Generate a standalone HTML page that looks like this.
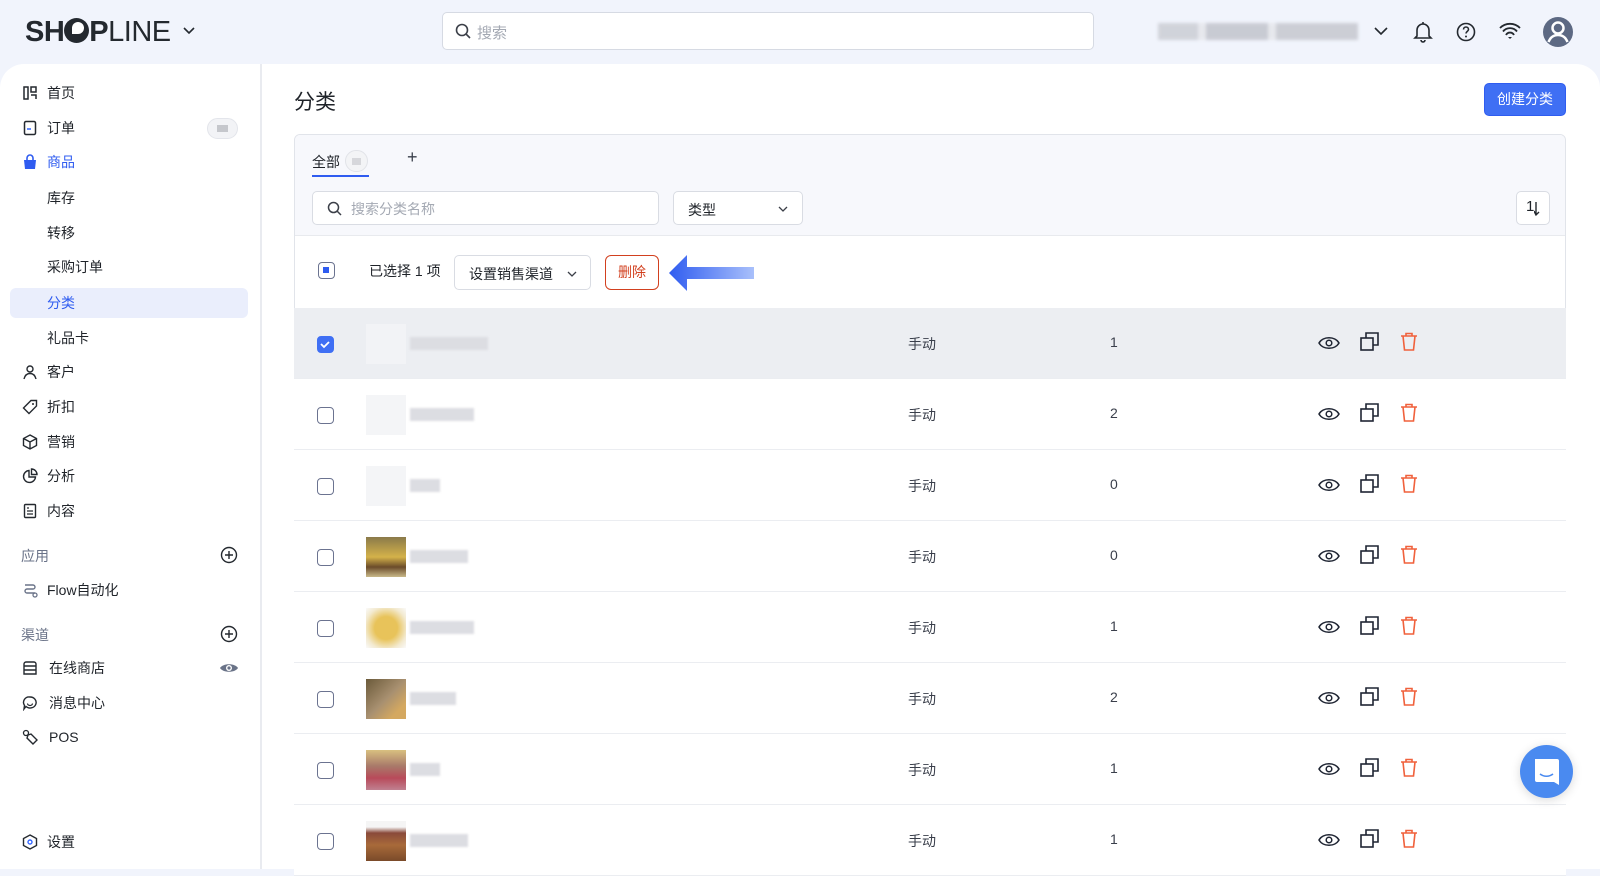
<!DOCTYPE html>
<html><head><meta charset="utf-8">
<style>
*{box-sizing:border-box;margin:0;padding:0}
body{width:1600px;height:869px;overflow:hidden;background:#f1f4fc;font-family:"Liberation Sans","Noto Sans CJK SC",sans-serif;color:#1f2329;position:relative;font-size:14px}
.abs{position:absolute}
.logo{left:25px;top:16px;font-size:29px;letter-spacing:-0.5px;color:#24292f;line-height:32px}
.logo b{font-weight:700}
.search{left:442px;top:12px;width:652px;height:38px;background:#fff;border:1px solid #d6dae3;border-radius:5px}
.search span{position:absolute;left:34px;top:9px;color:#a4a9b3;font-size:15px}
.panel{left:0;top:64px;width:1600px;height:805px;background:#fff;border-radius:24px 24px 0 0}
.side{left:260px;top:64px;width:2px;height:805px;background:#e9ebf0}
.nav{left:47px;font-size:14px;color:#1f2329;line-height:18px}
.ico{left:22px;width:16px;height:16px}
.sec{left:21px;color:#6a7388;font-size:14px}
.active{left:10px;top:288px;width:238px;height:30px;background:#eaeefc;border-radius:6px}
.card{left:294px;top:134px;width:1272px;height:740px;border:1px solid #e1e4ea;border-radius:6px;background:#fff;overflow:hidden}
.cardtop{left:0;top:0;width:1272px;height:101px;background:#f7f8fc;border-bottom:1px solid #e8eaee}
.input{background:#fff;border:1px solid #d9dce3;border-radius:5px;height:34px}
.row{position:absolute;left:0;width:1272px;height:71px;border-bottom:1px solid #ebedf1;background:#fff}
.cb{position:absolute;left:23px;top:28px;width:17px;height:17px;border:1.6px solid #6b7390;border-radius:4px;background:#fff}
.thumb{position:absolute;left:72px;top:16px;width:40px;height:40px}
.nm{position:absolute;left:116px;top:29px;height:13px;background:#dcdde2;filter:blur(1px)}
.t1{position:absolute;left:614px;top:26px;font-size:14px;color:#3a3f4b}
.t2{position:absolute;left:816px;top:26px;font-size:14px;color:#3a3f4b}
.ic{position:absolute;top:25px}
</style></head><body>
<div class="abs logo"><b>SH</b><b style="display:inline-block;width:25px;height:25px;border-radius:50%;background:#24292f;vertical-align:-2px;position:relative"><i style="position:absolute;left:8px;top:4px;width:12px;height:12px;border-radius:50% 50% 50% 0;background:#fff"></i></b><b>P</b>LINE</div>
<svg class="abs" style="left:183px;top:26px" width="12" height="10"><path d="M1 2l5 5 5-5" fill="none" stroke="#24292f" stroke-width="1.6"/></svg>
<div class="abs search"><svg style="position:absolute;left:12px;top:10px" width="17" height="17"><circle cx="7" cy="7" r="5.5" fill="none" stroke="#3b3f48" stroke-width="1.6"/><path d="M11 11l4 4" stroke="#3b3f48" stroke-width="1.6"/></svg><span>搜索</span></div>
<div class="abs" style="left:1158px;top:23px;width:200px;height:17px;background:linear-gradient(90deg,#c9cbd2 0 20%,#e5e6ea 20% 24%,#bfc1c9 24% 55%,#e5e6ea 55% 59%,#c3c5cc 59%);filter:blur(1.5px);opacity:.8"></div>
<svg class="abs" style="left:1374px;top:26px" width="14" height="10"><path d="M1 2l6 6 6-6" fill="none" stroke="#24292f" stroke-width="1.6"/></svg>
<svg class="abs" style="left:1413px;top:21px" width="20" height="22"><path d="M4 15V9a6 6 0 0112 0v6l2 2H2z M8 19a2 2 0 004 0 M10 1v2" fill="none" stroke="#24292f" stroke-width="1.6"/></svg>
<svg class="abs" style="left:1456px;top:22px" width="20" height="20"><circle cx="10" cy="10" r="8.5" fill="none" stroke="#24292f" stroke-width="1.6"/><path d="M7.5 7.5a2.5 2.5 0 115 0c0 1.8-2.5 2-2.5 4" fill="none" stroke="#24292f" stroke-width="1.6"/><circle cx="10" cy="14.5" r="1" fill="#24292f"/></svg>
<svg class="abs" style="left:1499px;top:22px" width="22" height="18"><path d="M1 6a14 14 0 0120 0M4 9.5a9 9 0 0114 0M7 13a4.5 4.5 0 018 0" fill="none" stroke="#24292f" stroke-width="1.8"/><path d="M9 15l2 2 2-2z" fill="#24292f"/></svg>
<svg class="abs" style="left:1542px;top:16px" width="32" height="32"><circle cx="16" cy="16" r="15" fill="#5d6983"/><circle cx="16" cy="12" r="5.5" fill="none" stroke="#fff" stroke-width="2.5"/><path d="M6.5 26c2-5 5.5-7 9.5-7s7.5 2 9.5 7" fill="none" stroke="#fff" stroke-width="2.5"/></svg>

<div class="abs panel"></div>
<div class="abs side"></div>
<div class="abs active"></div>
<!-- sidebar icons -->
<svg class="abs ico" style="top:85px"><path d="M2 2h4v12H2zM9 2h5v5H9zM9 10h5v4" fill="none" stroke="#24292f" stroke-width="1.5"/></svg>
<svg class="abs ico" style="top:120px"><rect x="2.5" y="1.5" width="11" height="13" rx="1.5" fill="none" stroke="#24292f" stroke-width="1.5"/><path d="M5 9h4" stroke="#3366ff" stroke-width="1.5"/></svg>
<svg class="abs ico" style="top:154px"><path d="M2 6h12l-1 9H3z" fill="#2f5cf0"/><path d="M5 7V4a3 3 0 016 0v3" fill="none" stroke="#2f5cf0" stroke-width="1.6"/></svg>
<svg class="abs ico" style="top:364px"><circle cx="8" cy="5" r="3" fill="none" stroke="#24292f" stroke-width="1.4"/><path d="M2 15c1-4 3.5-5.5 6-5.5s5 1.5 6 5.5" fill="none" stroke="#24292f" stroke-width="1.4"/></svg>
<svg class="abs ico" style="top:399px"><path d="M9 1.5h5.5V7L7 14.5 1.5 9z" fill="none" stroke="#24292f" stroke-width="1.4"/><circle cx="11" cy="5" r="1" fill="#24292f"/></svg>
<svg class="abs ico" style="top:434px"><path d="M8 1l6.5 3.5v7L8 15l-6.5-3.5v-7zM1.5 4.5L8 8l6.5-3.5M8 8v7" fill="none" stroke="#24292f" stroke-width="1.4"/></svg>
<svg class="abs ico" style="top:468px"><path d="M7 2.5a6 6 0 106.5 6.5H7z" fill="none" stroke="#24292f" stroke-width="1.4"/><path d="M9.5 1v5.5H15A5.5 5.5 0 009.5 1z" fill="none" stroke="#24292f" stroke-width="1.4"/></svg>
<svg class="abs ico" style="top:503px"><rect x="2.5" y="1.5" width="11" height="13" rx="1" fill="none" stroke="#24292f" stroke-width="1.4"/><path d="M5 5h2M5 8h6M5 11h6" stroke="#24292f" stroke-width="1.2"/></svg>
<svg class="abs ico" style="top:582px"><path d="M3 3h8a2 2 0 010 4H5a2 2 0 000 4h8" fill="none" stroke="#6a7388" stroke-width="1.4"/><circle cx="13" cy="13" r="2" fill="none" stroke="#6a7388" stroke-width="1.3"/></svg>
<svg class="abs ico" style="top:660px"><path d="M2 6V4a2 2 0 012-2h8a2 2 0 012 2v2M2 6h12M2 6v8h12V6M2 10h12" fill="none" stroke="#24292f" stroke-width="1.4"/></svg>
<svg class="abs ico" style="top:695px"><path d="M8 2a6 5.5 0 11-4 9.5L2 14l.5-3.5A5.5 5.5 0 018 2z" fill="none" stroke="#24292f" stroke-width="1.4"/><path d="M5.5 8.5a2.5 2 0 005 0" fill="none" stroke="#24292f" stroke-width="1.2"/></svg>
<svg class="abs ico" style="top:729px"><circle cx="4" cy="4" r="2.5" fill="none" stroke="#24292f" stroke-width="1.3"/><path d="M6 6l3-1 6 6-4 4-6-6z" fill="none" stroke="#24292f" stroke-width="1.4"/></svg>
<svg class="abs ico" style="top:834px"><path d="M8 1l6.5 3.5v7L8 15l-6.5-3.5v-7z" fill="none" stroke="#24292f" stroke-width="1.4"/><circle cx="8" cy="8" r="2" fill="none" stroke="#3366ff" stroke-width="1.4"/></svg>
<div class="abs nav" style="top:84px">首页</div>
<div class="abs nav" style="top:119px">订单</div>
<div class="abs" style="left:207px;top:118px;width:31px;height:21px;border:1.5px solid #e3e5eb;border-radius:11px;background:#f2f3f6"><i style="position:absolute;left:9px;top:6px;width:11px;height:7px;background:#c5c7cc"></i></div>
<div class="abs nav" style="top:153px;color:#2f5cf0">商品</div>
<div class="abs nav" style="top:189px">库存</div>
<div class="abs nav" style="top:224px">转移</div>
<div class="abs nav" style="top:258px">采购订单</div>
<div class="abs nav" style="top:294px;color:#2f5cf0">分类</div>
<div class="abs nav" style="top:329px">礼品卡</div>
<div class="abs nav" style="top:363px">客户</div>
<div class="abs nav" style="top:398px">折扣</div>
<div class="abs nav" style="top:433px">营销</div>
<div class="abs nav" style="top:467px">分析</div>
<div class="abs nav" style="top:502px">内容</div>
<div class="abs sec" style="top:546px">应用</div>
<svg class="abs" style="left:220px;top:546px" width="18" height="18"><circle cx="9" cy="9" r="7.5" fill="none" stroke="#24292f" stroke-width="1.4"/><path d="M9 5v8M5 9h8" stroke="#24292f" stroke-width="1.4"/></svg>
<div class="abs nav" style="top:581px">Flow自动化</div>
<div class="abs sec" style="top:625px">渠道</div>
<svg class="abs" style="left:220px;top:625px" width="18" height="18"><circle cx="9" cy="9" r="7.5" fill="none" stroke="#24292f" stroke-width="1.4"/><path d="M9 5v8M5 9h8" stroke="#24292f" stroke-width="1.4"/></svg>
<div class="abs nav" style="top:659px;left:49px">在线商店</div>
<svg class="abs" style="left:219px;top:661px" width="20" height="14"><path d="M1 7c3-5 15-5 18 0-3 5-15 5-18 0z" fill="#6a7388"/><circle cx="10" cy="7" r="3" fill="#fff"/><circle cx="10" cy="7" r="1.6" fill="#6a7388"/></svg>
<div class="abs nav" style="top:694px;left:49px">消息中心</div>
<div class="abs nav" style="top:728px;left:49px">POS</div>
<div class="abs nav" style="top:833px">设置</div>

<div class="abs" style="left:294px;top:86px;font-size:21px;color:#1f2329">分类</div>
<div class="abs" style="left:1484px;top:83px;width:82px;height:33px;background:#3f6ff4;border:1px solid #2f5cf0;border-radius:5px;color:#fff;font-size:14px;text-align:center;line-height:31px">创建分类</div>

<div class="abs card">
  <div class="abs cardtop"></div>
  <div class="abs" style="left:17px;top:17px;font-size:14px">全部</div>
  <div class="abs" style="left:50px;top:15px;width:23px;height:22px;border:1.5px solid #e1e3e8;border-radius:11px;background:#f3f4f6"><i style="position:absolute;left:6px;top:7px;width:9px;height:7px;background:#d6d7db"></i></div>
  <div class="abs" style="left:17px;top:40px;width:57px;height:2px;background:#2f5cf0"></div>
  <div class="abs" style="left:112px;top:12px;font-size:18px;color:#3a3f4b">+</div>
  <div class="abs input" style="left:17px;top:56px;width:347px"><svg style="position:absolute;left:14px;top:9px" width="16" height="16"><circle cx="6.5" cy="6.5" r="5" fill="none" stroke="#3b3f48" stroke-width="1.5"/><path d="M10 10l4 4" stroke="#3b3f48" stroke-width="1.5"/></svg><span style="position:absolute;left:38px;top:7px;color:#a4a9b3">搜索分类名称</span></div>
  <div class="abs input" style="left:378px;top:56px;width:130px"><span style="position:absolute;left:14px;top:8px">类型</span><svg style="position:absolute;left:104px;top:13px" width="10" height="8"><path d="M1 2l4 4 4-4" fill="none" stroke="#3b3f48" stroke-width="1.3"/></svg></div>
  <div class="abs input" style="left:1221px;top:56px;width:34px"><span style="position:absolute;left:9px;top:6px;font-size:15px">1</span><svg style="position:absolute;left:17px;top:9px" width="8" height="16"><path d="M2 1v12M0 10l2 4 3-3" fill="none" stroke="#24292f" stroke-width="1.4"/></svg></div>
  <!-- selection bar -->
  <div class="abs" style="left:23px;top:127px;width:17px;height:17px;border:1.6px solid #6b7390;border-radius:4px"><i style="position:absolute;left:4px;top:4px;width:6px;height:6px;background:#2f5cf0"></i></div>
  <div class="abs" style="left:74px;top:126px">已选择 1 项</div>
  <div class="abs input" style="left:159px;top:120px;width:137px;height:35px"><span style="position:absolute;left:14px;top:8px">设置销售渠道</span><svg style="position:absolute;left:112px;top:14px" width="10" height="8"><path d="M1 2l4 4 4-4" fill="none" stroke="#3b3f48" stroke-width="1.3"/></svg></div>
  <div class="abs" style="left:310px;top:120px;width:54px;height:35px;border:1.5px solid #d2401f;border-radius:6px;color:#d2401f;text-align:center;line-height:32px">删除</div>
  <svg class="abs" style="left:374px;top:118px" width="86" height="40"><defs><linearGradient id="g" x1="0" x2="1"><stop offset="0" stop-color="#2f5cf0"/><stop offset="1" stop-color="#a9c0fb"/></linearGradient></defs><path d="M0 20L18 2v12h67v12H18v12z" fill="url(#g)"/></svg>
</div>

<div class="abs" style="left:294px;top:308px;width:1272px;height:561px">
  <div class="row" style="top:0;background:#eceef2"><div class="cb" style="background:#3f6ff4;border-color:#3f6ff4"><svg width="14" height="14" style="position:absolute;left:0;top:0"><path d="M3 7l3 3 5-5" fill="none" stroke="#fff" stroke-width="1.8"/></svg></div><div class="thumb" style="background:#f2f3f6"></div><div class="nm" style="width:78px"></div><div class="t1">手动</div><div class="t2">1</div></div>
  <div class="row" style="top:71px"><div class="cb"></div><div class="thumb" style="background:#f4f5f7"></div><div class="nm" style="width:64px"></div><div class="t1">手动</div><div class="t2">2</div></div>
  <div class="row" style="top:142px"><div class="cb"></div><div class="thumb" style="background:#f4f5f7"></div><div class="nm" style="width:30px"></div><div class="t1">手动</div><div class="t2">0</div></div>
  <div class="row" style="top:213px"><div class="cb"></div><div class="thumb" style="background:linear-gradient(#8a7a4a,#d4b24a 50%,#6b4c2a 75%,#c9b98a)"></div><div class="nm" style="width:58px"></div><div class="t1">手动</div><div class="t2">0</div></div>
  <div class="row" style="top:284px"><div class="cb"></div><div class="thumb" style="background:radial-gradient(#e8c35a 40%,#f3ead0 75%,#fafafa)"></div><div class="nm" style="width:64px"></div><div class="t1">手动</div><div class="t2">1</div></div>
  <div class="row" style="top:355px"><div class="cb"></div><div class="thumb" style="background:linear-gradient(135deg,#6b5a3a,#a89070 50%,#d4a860 80%)"></div><div class="nm" style="width:46px"></div><div class="t1">手动</div><div class="t2">2</div></div>
  <div class="row" style="top:426px"><div class="cb"></div><div class="thumb" style="background:linear-gradient(#d8c080,#a87a6a 40%,#b84a5a 70%,#c08090)"></div><div class="nm" style="width:30px"></div><div class="t1">手动</div><div class="t2">1</div></div>
  <div class="row" style="top:497px"><div class="cb"></div><div class="thumb" style="background:linear-gradient(#f5f5f5 15%,#8a4a3a 30%,#a86a3a 60%,#7a4a2a)"></div><div class="nm" style="width:58px"></div><div class="t1">手动</div><div class="t2">1</div></div>
</div>
<!-- action icons -->
<div class="abs" style="left:0;top:0">
<svg width="0" height="0"><defs>
<g id="eye"><path d="M1 9c4-7 16-7 20 0-4 7-16 7-20 0z" fill="none" stroke="#1f2533" stroke-width="1.5"/><circle cx="11" cy="9" r="2.8" fill="none" stroke="#1f2533" stroke-width="1.5"/></g>
<g id="cp"><rect x="1" y="6" width="12" height="12" fill="none" stroke="#1f2533" stroke-width="1.6"/><path d="M6 6V1h12v12h-5" fill="none" stroke="#1f2533" stroke-width="1.6"/></g>
<g id="tr"><path d="M1 4h16M6 4V1.5h6V4M3 4l1.5 14h9L15 4" fill="none" stroke="#f0613c" stroke-width="1.6"/></g>
</defs></svg>
</div>
<svg class="abs" style="left:0;top:0" width="1600" height="869">
<g transform="translate(1318,334)"><use href="#eye"/></g><g transform="translate(1360,332)"><use href="#cp"/></g><g transform="translate(1400,332)"><use href="#tr"/></g>
<g transform="translate(1318,405)"><use href="#eye"/></g><g transform="translate(1360,403)"><use href="#cp"/></g><g transform="translate(1400,403)"><use href="#tr"/></g>
<g transform="translate(1318,476)"><use href="#eye"/></g><g transform="translate(1360,474)"><use href="#cp"/></g><g transform="translate(1400,474)"><use href="#tr"/></g>
<g transform="translate(1318,547)"><use href="#eye"/></g><g transform="translate(1360,545)"><use href="#cp"/></g><g transform="translate(1400,545)"><use href="#tr"/></g>
<g transform="translate(1318,618)"><use href="#eye"/></g><g transform="translate(1360,616)"><use href="#cp"/></g><g transform="translate(1400,616)"><use href="#tr"/></g>
<g transform="translate(1318,689)"><use href="#eye"/></g><g transform="translate(1360,687)"><use href="#cp"/></g><g transform="translate(1400,687)"><use href="#tr"/></g>
<g transform="translate(1318,760)"><use href="#eye"/></g><g transform="translate(1360,758)"><use href="#cp"/></g><g transform="translate(1400,758)"><use href="#tr"/></g>
<g transform="translate(1318,831)"><use href="#eye"/></g><g transform="translate(1360,829)"><use href="#cp"/></g><g transform="translate(1400,829)"><use href="#tr"/></g>
</svg>
<div class="abs" style="left:1520px;top:745px;width:53px;height:53px;border-radius:50%;background:#4a8af0;box-shadow:0 2px 10px rgba(0,0,0,.15)"><svg width="53" height="53"><path d="M15 14h22a2 2 0 012 2v24l-5-3H17a2 2 0 01-2-2z" fill="#fff"/><path d="M20 29c4 3 9 3 13 0" fill="none" stroke="#4a8af0" stroke-width="1.6"/></svg></div>
</body></html>
